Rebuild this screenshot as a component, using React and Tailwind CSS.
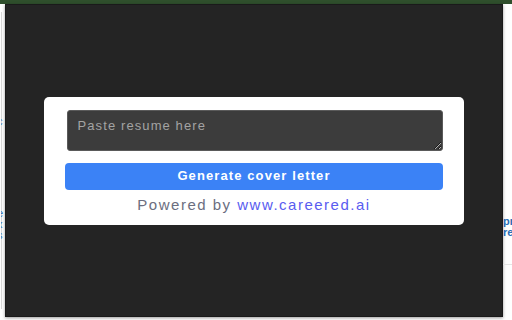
export default function App() {
  const font = { fontFamily: '"Liberation Sans", Arial, sans-serif' };
  return (
    <div className="flex h-[320px] w-[512px] flex-col overflow-hidden bg-white" style={font}>
      <div className="h-[4px] w-full shrink-0 bg-[#2f4f2c]" />
      <div className="flex h-[313px] shrink-0">
        <div className="flex w-[5px] shrink-0 overflow-hidden border-l border-l-white">
          <div className="w-[1px] shrink-0 bg-[#d8d8d8] my-[8px]" />
          <div className="ml-[-5px] flex flex-col pt-[112px] text-[11px] leading-[11px] text-[#2a6db5]">
            <div>c</div>
            <div className="mt-[81px]">e</div>
            <div>x</div>
            <div>s</div>
          </div>
        </div>
        <div className="flex h-[313px] w-[498px] shrink-0 items-center justify-center border border-[#1a1a1a] bg-[#242424] shadow-[0_1px_3px_rgba(0,0,0,0.4)]">
          <div className="flex w-[420px] flex-col items-center rounded-[5px] bg-white px-[21px] pt-[13px] pb-[11px]">
            <textarea
              placeholder="Paste resume here"
              className="ml-[1px] h-[41px] w-[376px] rounded-[3px] border border-[#5a5a5a] bg-[#3c3c3c] px-[10px] py-[5px] text-[13px] tracking-[1.1px] text-white outline-none placeholder:text-[#a3a3a3]"
              style={font}
            />
            <button
              className="mt-[12px] h-[27px] w-[378px] rounded-[4px] bg-[#3b82f6] text-[13px] font-bold tracking-[1.1px] text-white"
              style={font}
            >
              Generate cover letter
            </button>
            <div className="mt-[6px] text-[15px] leading-[18px] tracking-[1.5px] text-[#6b6e80]">
              Powered by <span className="text-[#5a5cf0]">www.careered.ai</span>
            </div>
          </div>
        </div>
        <div className="flex w-[9px] shrink-0 flex-col overflow-hidden">
          <div className="flex flex-col pt-[212px] text-[11px] font-bold leading-[11px] text-[#2a6db5]">
            <div>pr</div>
            <div>re</div>
          </div>
          <div className="mt-[26px] h-[1px] w-full bg-[#e5e5e5]" />
        </div>
      </div>
    </div>
  );
}
